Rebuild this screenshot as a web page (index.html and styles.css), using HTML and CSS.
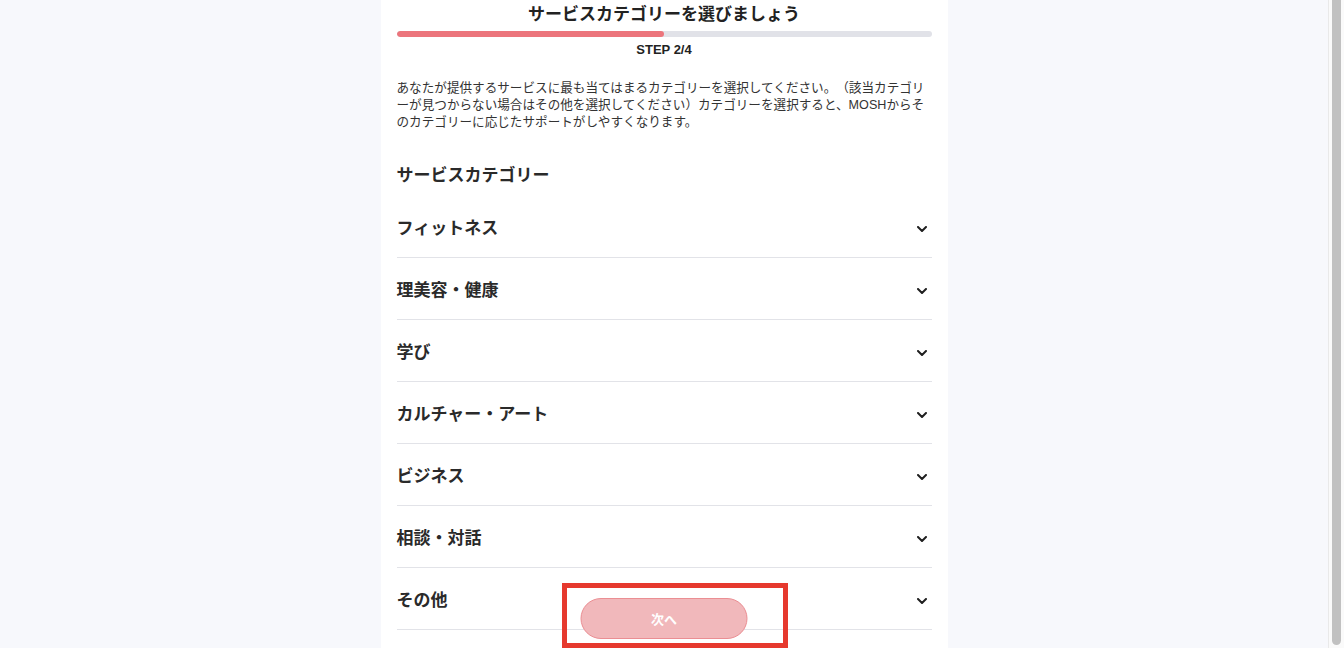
FILE: index.html
```html
<!DOCTYPE html>
<html lang="ja">
<head>
<meta charset="utf-8">
<title>サービスカテゴリーを選びましょう</title>
<link rel="stylesheet" href="styles.css">
</head>
<body>
<div class="page">
  <main class="panel">
    <h1 class="title">サービスカテゴリーを選びましょう</h1>
    <div class="progress"><div class="progress-fill" style="width:50%"></div></div>
    <p class="step">STEP 2/4</p>
    <p class="lead">あなたが提供するサービスに最も当てはまるカテゴリーを選択してください。（該当カテゴリーが見つからない場合はその他を選択してください）カテゴリーを選択すると、MOSHからそのカテゴリーに応じたサポートがしやすくなります。</p>
    <h2 class="section-title">サービスカテゴリー</h2>
    <ul class="category-list">
      <li class="category"><span>フィットネス</span><svg class="chev" width="10" height="6" viewBox="0 0 10 6"><polyline points="1,1 5,5 9,1"/></svg></li>
      <li class="category"><span>理美容・健康</span><svg class="chev" width="10" height="6" viewBox="0 0 10 6"><polyline points="1,1 5,5 9,1"/></svg></li>
      <li class="category"><span>学び</span><svg class="chev" width="10" height="6" viewBox="0 0 10 6"><polyline points="1,1 5,5 9,1"/></svg></li>
      <li class="category"><span>カルチャー・アート</span><svg class="chev" width="10" height="6" viewBox="0 0 10 6"><polyline points="1,1 5,5 9,1"/></svg></li>
      <li class="category"><span>ビジネス</span><svg class="chev" width="10" height="6" viewBox="0 0 10 6"><polyline points="1,1 5,5 9,1"/></svg></li>
      <li class="category"><span>相談・対話</span><svg class="chev" width="10" height="6" viewBox="0 0 10 6"><polyline points="1,1 5,5 9,1"/></svg></li>
      <li class="category"><span>その他</span><svg class="chev" width="10" height="6" viewBox="0 0 10 6"><polyline points="1,1 5,5 9,1"/></svg></li>
    </ul>
    <button class="next-btn" type="button">次へ</button>
    <div class="highlight"></div>
  </main>
  <div class="scrollbar"><div class="scroll-thumb"></div></div>
</div>
</body>
</html>
```
FILE: styles.css
```css
* { box-sizing: border-box; }
html, body {
  margin: 0;
  height: 648px;
  overflow: hidden;
}
body {
  background: #f7f8fc;
  font-family: "Liberation Sans", "Noto Sans CJK JP", sans-serif;
  color: #2a2a2a;
  text-spacing-trim: space-all;
}
.page {
  display: flex;
  height: 648px;
}
.panel {
  position: relative;
  flex: 0 0 567px;
  margin: 0 auto;
  height: 648px;
  overflow: hidden;
  background: #ffffff;
  padding: 3px 16px 0;
  display: flex;
  flex-direction: column;
}
.title {
  margin: 0;
  font-size: 17px;
  line-height: 24px;
  font-weight: 700;
  text-align: center;
  color: #222;
}
.progress {
  margin-top: 4px;
  height: 6px;
  border-radius: 3px;
  background: #e1e2e8;
  overflow: hidden;
  flex: 0 0 6px;
}
.progress-fill {
  height: 100%;
  background: #ec757c;
  border-radius: 3px;
}
.step {
  margin: 4px 0 0;
  font-size: 13px;
  line-height: 18px;
  font-weight: 700;
  text-align: center;
  color: #222;
}
.lead {
  margin: 21px 0 0;
  font-size: 12.6px;
  line-height: 17px;
  color: #333;
  text-spacing-trim: space-all;
}
.section-title {
  margin: 33px 0 0;
  font-size: 17px;
  line-height: 24px;
  font-weight: 700;
  color: #2a2a2a;
}
.category-list {
  list-style: none;
  margin: 8px 0 0;
  padding: 0;
}
.category {
  display: flex;
  align-items: center;
  justify-content: space-between;
  padding: 21px 0 16px;
  border-bottom: 1px solid #e2e3e8;
  font-size: 17px;
  line-height: 24px;
  font-weight: 700;
  color: #2a2a2a;
}
.chev {
  margin-right: 5px;
  fill: none;
  stroke: #1f1f1f;
  stroke-width: 2;
  stroke-linecap: round;
  stroke-linejoin: round;
}
.next-btn {
  position: absolute;
  left: 50%;
  bottom: 9px;
  transform: translateX(-50%);
  width: 167px;
  height: 41px;
  border-radius: 21px;
  border: 1px solid #eb8e93;
  background: #f1b8bb;
  color: #ffffff;
  font-family: "Liberation Sans", "Noto Sans CJK JP", sans-serif;
  font-size: 13px;
  font-weight: 700;
  padding: 0;
}
.highlight {
  position: absolute;
  left: 181px;
  bottom: 0;
  width: 226px;
  height: 65px;
  border: 5px solid #e6392e;
  pointer-events: none;
}
.scrollbar {
  flex: 0 0 16px;
  height: 648px;
  background: #fafafa;
  border-left: 1px solid #e9e9e9;
  padding: 0 3px 3px 3px;
}
.scroll-thumb {
  height: 100%;
  width: 9px;
  border-radius: 0 0 5px 5px;
  background: #c1c1c1;
}
```
